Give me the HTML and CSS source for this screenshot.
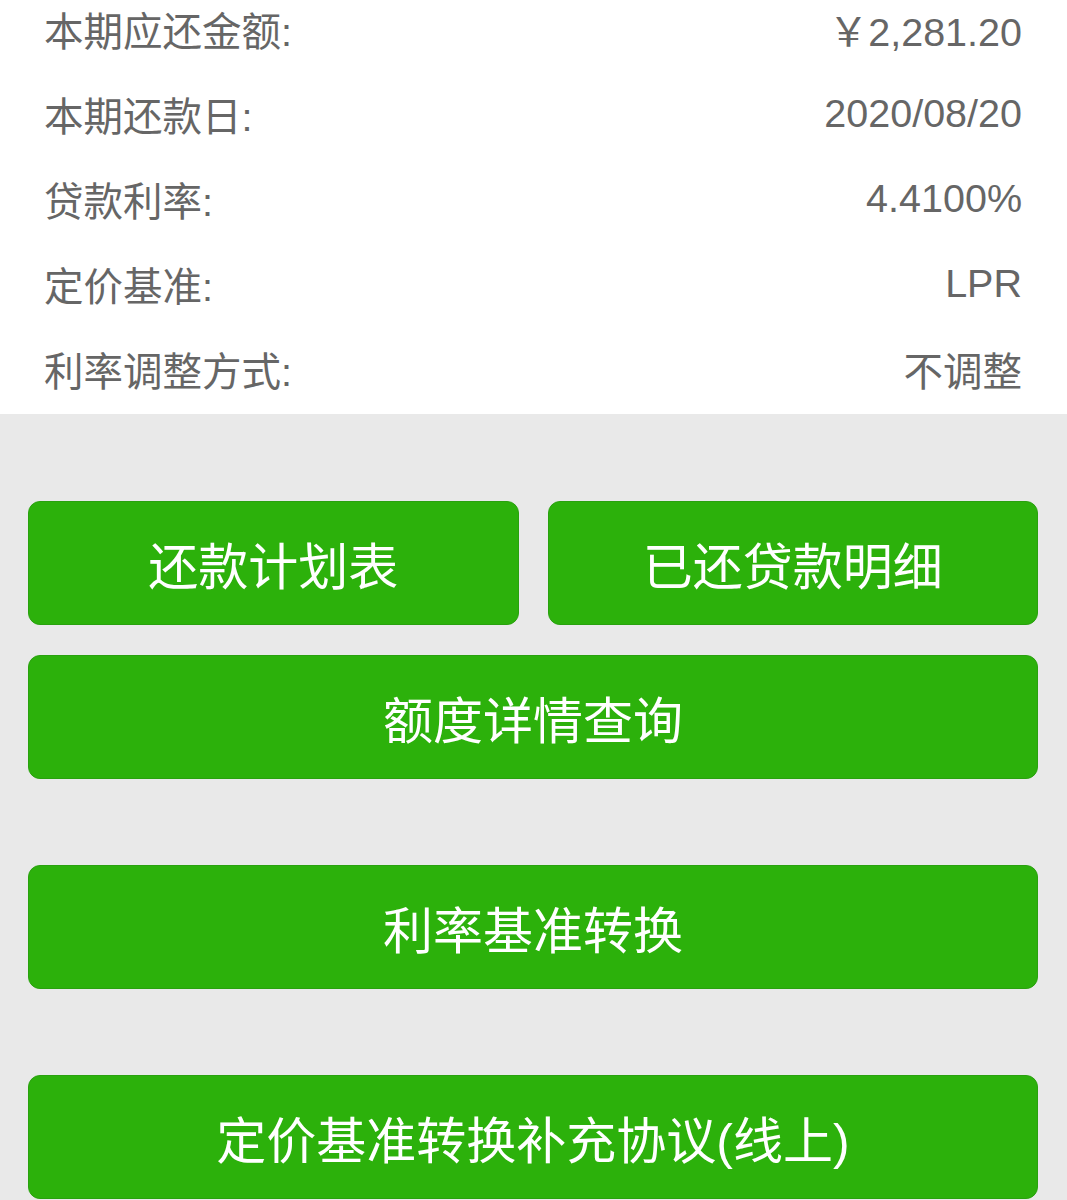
FILE: index.html
```html
<!DOCTYPE html>
<html lang="zh-CN">

<head>
  <meta charset="UTF-8" />
  <title>贷款详情</title>
  <link rel="stylesheet" href="styles.css">
</head>

<body>
  <div class="info">
    <div class="info-row">
      <span class="label">本期应还金额:</span>
      <span class="value">￥2,281.20</span>
    </div>
    <div class="info-row">
      <span class="label">本期还款日:</span>
      <span class="value">2020/08/20</span>
    </div>
    <div class="info-row">
      <span class="label">贷款利率:</span>
      <span class="value">4.4100%</span>
    </div>
    <div class="info-row">
      <span class="label">定价基准:</span>
      <span class="value">LPR</span>
    </div>
    <div class="info-row">
      <span class="label">利率调整方式:</span>
      <span class="value">不调整</span>
    </div>
  </div>

  <div class="actions">
    <div class="btn-pair">
      <button class="btn">还款计划表</button>
      <button class="btn">已还贷款明细</button>
    </div>
    <button class="btn">额度详情查询</button>
    <button class="btn spaced">利率基准转换</button>
    <button class="btn spaced">定价基准转换补充协议(线上)</button>
  </div>
</body>

</html>
```

FILE: styles.css
```css
:root {
  --green: #2cb10b;
  --green-border: #29a10e;
  --page-bg: #e9e9e9;
  --text-gray: #666666;
}

* {
  margin: 0;
  padding: 0;
  box-sizing: border-box;
}

body {
  font-family: "Liberation Sans", "Noto Sans CJK SC", sans-serif;
  background-color: var(--page-bg);
  overflow: hidden;
}

.info {
  background-color: #ffffff;
  margin-top: -14px;
  padding: 0 45px 3px 44px;
}

.info-row {
  display: flex;
  justify-content: space-between;
  align-items: center;
  height: 85px;
  font-size: 39.5px;
  color: var(--text-gray);
}

.actions {
  display: flex;
  flex-direction: column;
  gap: 30px;
  padding: 87px 29px 0 28px;
}

.btn-pair {
  display: flex;
  gap: 29px;
}

.btn-pair .btn {
  flex: 1;
}

.btn {
  height: 124px;
  width: 100%;
  background-color: var(--green);
  border: 1px solid var(--green-border);
  border-radius: 12px;
  color: #ffffff;
  font-family: "Liberation Sans", "Noto Sans CJK SC", sans-serif;
  font-size: 50px;
  cursor: pointer;
}

.btn.spaced {
  margin-top: 56px;
}
```
